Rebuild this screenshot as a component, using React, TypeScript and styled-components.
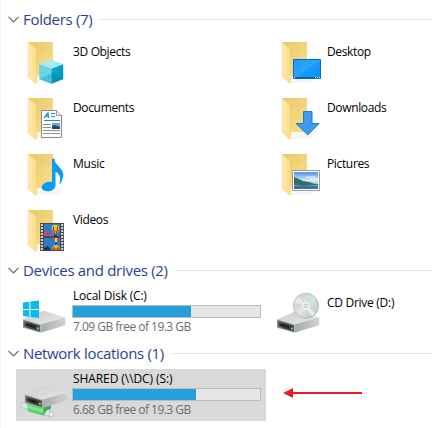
import React from "react";
import styled, { createGlobalStyle } from "styled-components";

const GlobalStyle = createGlobalStyle`
  * { box-sizing: border-box; }
  body { margin: 0; background: #fff; overflow: hidden; }
`;

const Pane = styled.main`
  width: 432px;
  height: 428px;
  padding-top: 4px;
  overflow: hidden;
  border-left: 1px solid #f5f5f5;
  background: #fff;
  font-family: "Open Sans", "Noto Sans", sans-serif;
  font-size: 12px;
  color: #000;
`;

const GroupHeader = styled.header`
  display: flex;
  align-items: center;
  height: 31px;
  padding-left: 7px;
`;

const GroupTitle = styled.h2<{ $spacing: number }>`
  margin: 0 7px 0 4px;
  padding-bottom: 2px;
  font-size: 15px;
  line-height: 20px;
  font-weight: 400;
  letter-spacing: ${(p) => p.$spacing}px;
  white-space: nowrap;
  color: #2b3f93;
`;

const Rule = styled.div`
  flex: 1;
  height: 1px;
  background: #e2e2e2;
`;

const Tiles = styled.div`
  display: grid;
  grid-template-columns: 250px 250px;
  grid-auto-rows: 52px;
  gap: 4px;
  padding-left: 15px;
`;

const TileBox = styled.div<{ $selected?: boolean }>`
  display: flex;
  padding: 2px 5px 0 4px;
  background: ${(p) => (p.$selected ? "#d9d9d9" : "transparent")};
`;

const Icon = styled.svg`
  flex: none;
  width: 48px;
  height: 48px;
  overflow: visible;
`;

const Details = styled.div<{ $center?: boolean }>`
  display: flex;
  flex-direction: column;
  width: 189px;
  margin-left: 4px;
  padding-top: ${(p) => (p.$center ? 7 : 0)}px;
`;

const Name = styled.span<{ $spacing: number }>`
  padding-left: 1px;
  line-height: 16px;
  letter-spacing: ${(p) => p.$spacing}px;
  white-space: nowrap;
`;

const Meter = styled.div`
  width: 189px;
  height: 13px;
  margin-top: 1px;
  border: 1px solid #bcbcbc;
  background: #e6e6e6;
`;

const MeterFill = styled.div<{ $width: number }>`
  width: ${(p) => p.$width}px;
  height: 11px;
  background: #26a0da;
`;

const Free = styled.span`
  padding-left: 1px;
  margin-top: 1px;
  line-height: 16px;
  letter-spacing: -0.52px;
  white-space: nowrap;
  color: #6d6d6d;
`;

const ArrowLayer = styled.svg`
  position: absolute;
  left: 282px;
  top: 386px;
  width: 82px;
  height: 14px;
`;

const Chevron = () => (
  <svg width="11" height="7" viewBox="0 0 11 7">
    <path d="M.5 .8L5.5 5.8L10.5 .8" fill="none" stroke="#6b6b6b" strokeWidth="1.2" />
  </svg>
);

const GradientSheet = styled.svg`
  display: block;
`;

const Defs = () => (
  <GradientSheet width="0" height="0">
    <defs>
      <linearGradient id="back" x1="0" y1="0" x2="1" y2="1">
        <stop offset="0" stopColor="#eac768" /><stop offset="1" stopColor="#fae08f" />
      </linearGradient>
      <linearGradient id="flap" x1="0" y1="0" x2="1" y2="0">
        <stop offset="0" stopColor="#ffeaae" /><stop offset="1" stopColor="#fadb87" />
      </linearGradient>
      <linearGradient id="screen" x1="0" y1="0" x2="1" y2="1">
        <stop offset="0" stopColor="#179aff" /><stop offset=".5" stopColor="#2aa5ff" />
        <stop offset=".53" stopColor="#169aff" /><stop offset="1" stopColor="#0c91f5" />
      </linearGradient>
      <linearGradient id="sky" x1="0" y1="0" x2="0" y2="1">
        <stop offset="0" stopColor="#4c91e5" /><stop offset=".5" stopColor="#d3ecf8" />
        <stop offset="1" stopColor="#4487b2" />
      </linearGradient>
      <linearGradient id="top" x1="0" y1="0" x2="1" y2="1">
        <stop offset="0" stopColor="#cbcbcd" /><stop offset="1" stopColor="#e9e9ea" />
      </linearGradient>
      <linearGradient id="side" x1="0" y1="0" x2="1" y2="0">
        <stop offset="0" stopColor="#a8a8ab" /><stop offset="1" stopColor="#d2d2d5" />
      </linearGradient>
      <linearGradient id="front" x1="0" y1="0" x2="1" y2="0">
        <stop offset="0" stopColor="#6a6b6d" /><stop offset=".4" stopColor="#3c3e40" /><stop offset="1" stopColor="#404244" />
      </linearGradient>
      <linearGradient id="disc" x1="0" y1="0" x2="1" y2="1">
        <stop offset="0" stopColor="#c6cccc" /><stop offset=".5" stopColor="#dfe3e3" />
        <stop offset="1" stopColor="#b4bbbb" />
      </linearGradient>
      <linearGradient id="pipe" gradientUnits="userSpaceOnUse" x1="18" y1="32" x2="15" y2="43">
        <stop offset="0" stopColor="#2aa53f" /><stop offset=".55" stopColor="#86ee93" /><stop offset="1" stopColor="#35b94c" />
      </linearGradient>
      <linearGradient id="cubeRight" x1="0" y1="0" x2="1" y2="1">
        <stop offset="0" stopColor="#0cb0d2" /><stop offset="1" stopColor="#008fb4" />
      </linearGradient>
    </defs>
  </GradientSheet>
);

const Folder = ({ children }: { children: React.ReactNode }) => (
  <Icon viewBox="0 0 48 48">
    <path d="M8 5H33V39H15Z" fill="url(#back)" />
    <path d="M15 46L17 39H40V45L35 46Z" fill="#777" opacity=".06" />
    <path d="M8 5L15.2 11.2Q16 12 16 13V38.4L17 39V46Q16 47 14.5 45.8L8 40.5Z" fill="url(#flap)" />
    <path d="M8.2 5.5V40.5" stroke="#f4d98d" strokeWidth=".5" />
    {children}
  </Icon>
);

const CubeIcon = () => (
  <Folder>
    <path d="M19.3 27L31.5 31.5V46.7L19.3 42Z" fill="#68d3e5" />
    <path d="M31.5 31.5L43.2 27V42L31.5 46.7Z" fill="url(#cubeRight)" />
    <path d="M19.3 27L31.5 22.7L43.2 27L31.5 31.5Z" fill="#a6eaf2" />
    <path d="M19.3 42L31.5 36.5V46.7Z" fill="#28b7d2" opacity=".65" />
    <path d="M31.5 36.5L43.2 42L31.5 46.7Z" fill="#0582a5" opacity=".5" />
  </Folder>
);

const DesktopIcon = () => (
  <Folder>
    <path d="M19.5 22.5H46.5V41.5H19.5Z" fill="url(#screen)" stroke="#086db9" />
    <path d="M19 40.5H47" stroke="#075c9d" />
    <path d="M20 40.5H21M41 40.5H42M43 40.5H44M45 40.5H46" stroke="#fff" />
  </Folder>
);

const DocumentIcon = () => (
  <Folder>
    <path d="M21.5 17.5H36.5L41.5 22.5V44.5H21.5Z" fill="#fafafa" stroke="#8b8b8b" />
    <path d="M36.5 17.5V22.5H41.5" fill="#e9e9e9" stroke="#8b8b8b" strokeWidth=".8" />
    <path d="M24 25L28 19.8L28.5 25M25.5 23.2H28.3" fill="none" stroke="#1987cf" strokeWidth="1.2" />
    <path d="M31 20.5H35M31 23.5H35M24 27.5H40" stroke="#1690dc" />
    <path d="M23 31.5H31M23 34.5H31M23 37.5H40M23 40.5H40" stroke="#919191" />
    <path d="M32 30H40V36H32Z" fill="#6faadf" />
    <path d="M32 33L35 32L40 34V36H32Z" fill="#244b5d" />
  </Folder>
);

const DownloadIcon = () => (
  <Folder>
    <path d="M29.5 18.5H38V30.5H45.2L33.7 42L22 30.5H29.5Z" fill="#3b9ded" stroke="#247dc9" />
  </Folder>
);

const MusicIcon = () => (
  <Folder>
    <path d="M32 10H34C34.5 17 43 18.5 43 27C43 31 41 34 39 36C42 28 38.5 23.5 35.5 23V36.5C35.5 40.5 30.5 42.5 27 42.2C23.5 42 21 40.2 22 37.2C23 34 28 31.8 32 33.2Z" fill="#079cf5" />
    <path d="M32.5 10H34C34.6 17 43 18.5 43 27" fill="none" stroke="#057fcb" strokeWidth=".7" />
  </Folder>
);

const PictureIcon = () => (
  <Folder>
    <path d="M18.5 21.5H45.5V41.5H18.5Z" fill="#fff" stroke="#9b9b9b" />
    <path d="M20 23H44V40H20Z" fill="url(#sky)" />
    <path d="M20 28L25 30L29 32L35 33L41 35L44 35V36H20Z" fill="#376e60" />
    <path d="M20 37L29 36L44 37V40H20Z" fill="#39749b" />
    <path d="M32 28H42M36 30H44" stroke="#fff" strokeWidth="2" opacity=".4" />
  </Folder>
);

const Balloon = ({ y }: { y: number }) => (
  <g transform={`translate(0 ${y})`}>
    <path d="M31.5 4Q32 .7 35.5 .7Q39.2 .7 39.2 4.4Q39.2 7.5 36.5 10H34.6Q31.5 7.3 31.5 4Z" fill="#f1bd1d" />
    <path d="M33.5 3Q32.8 5.5 35 10M37.5 3Q38 5.5 36 10" fill="none" stroke="#342756" strokeWidth=".8" />
    <path d="M32 7H39" stroke="#e44f32" strokeWidth=".8" />
    <path d="M34 11H37V12.5H34Z" fill="#33291f" />
  </g>
);

const VideoIcon = () => (
  <Folder>
    <path d="M20 18H44V46H20Z" fill="#4a4a4a" />
    <path d="M24 19H40V31H24Z" fill="#317ac9" />
    <path d="M24 33H40V45H24Z" fill="#297bcf" />
    <path d="M21.8 19V46M42.2 19V46" stroke="#d7d7d7" strokeWidth="2" strokeDasharray="2 1" />
    <path d="M24 28L27 26L31 29L34 31H24Z" fill="#e04d6b" />
    <path d="M25 29H31M28 27V31" stroke="#7952a4" />
    <Balloon y={19} />
    <path d="M33 33H39L37 37H35Z" fill="#ec4c45" />
    <path d="M35 33H37V37H35Z" fill="#f1cd34" />
    <path d="M35 38H37V39H35Z" fill="#252525" />
    <path d="M24 43L28 41L31 45H24Z" fill="#322849" />
    <path d="M32 45Q32 40 36 40Q40 40 40 45Z" fill="#f1bd1d" />
    <path d="M32 44H40" stroke="#d24431" strokeWidth="1" />
    <path d="M34 42V45M38 42V45" stroke="#342756" strokeWidth=".8" />
  </Folder>
);

const DriveBody = () => (
  <>
    <path d="M3 31.5L21.5 23.2Q23 22.7 24.5 23L45.3 29.6L20.5 36.8Z" fill="url(#top)" />
    <path d="M20.5 36.6L45.3 29.4V37.2L20.5 44.8Z" fill="url(#side)" />
    <path d="M3 31.3L20.5 36.6V44.8L3 39.8Z" fill="#a2a2a4" />
    <path d="M3.6 32.6L19.8 37.6V43.6L3.6 38.8Z" fill="url(#front)" />
    <path d="M5.5 36.3L15 39.1" stroke="#1b1b1b" strokeWidth="1.8" />
    <path d="M17 39.6H19V41.8H17Z" fill="#3fe03a" />
  </>
);

const LocalDiskIcon = () => (
  <Icon viewBox="0 0 48 48">
    <DriveBody />
    <path d="M3 14.6L9.4 13.8V20.9H3ZM10.4 13.6L19 12.6V20.9H10.4ZM3 21.9H9.4V28.9L3 28.1ZM10.4 21.9H19V30L10.4 29Z" fill="#08b9ed" />
  </Icon>
);

const CdIcon = () => (
  <Icon viewBox="0 0 48 48">
    <DriveBody />
    <circle cx="32" cy="17.8" r="12.6" fill="url(#disc)" stroke="#aab2b2" strokeWidth=".8" />
    <path d="M30 15L24.5 7.5L20 14.5L30 17Z" fill="#f4f6f6" opacity=".55" />
    <path d="M34 20L41.5 24.5L38 28.5L33 21Z" fill="#f5f7f7" opacity=".7" />
    <path d="M33 15L36 6L39.5 8L34.5 16Z" fill="#a8eddf" opacity=".65" />
    <path d="M20 15L29 17V18L20 19Z" fill="#e6cbea" opacity=".7" />
    <circle cx="32" cy="17.8" r="3.6" fill="#dde1e1" stroke="#fff" strokeWidth=".8" />
    <circle cx="32" cy="17.8" r="1.5" fill="#f9fafa" stroke="#adb4b4" strokeWidth=".7" />
  </Icon>
);

const NetworkDriveIcon = () => (
  <Icon viewBox="0 0 48 48">
    <path d="M.8 33L5 32L9 34L8 38.6L2.5 36.8Z" fill="#e4e7e7" stroke="#b0b0b0" strokeWidth=".5" />
    <path d="M22 38L32 40.6Q34.5 42.5 32 45.8L24 43.8Z" fill="#e4e7e7" stroke="#acacac" strokeWidth=".6" />
    <ellipse cx="31.4" cy="43.2" rx="1.9" ry="2.5" fill="#f4f5f5" stroke="#a4a8a8" strokeWidth=".6" />
    <path d="M8 31L25.5 36.5Q23 40.5 24.5 44.8L8.2 40.2Q6 36 8 31Z" fill="url(#pipe)" />
    <path d="M22 37L31 34.2V37.8L26.5 39.4L24.3 43.5Q22.5 40 24 37.5Z" fill="#3cae50" />
    <g transform="translate(1.8 -7.8)"><DriveBody /></g>
  </Icon>
);

type FolderTileProps = { name: string; icon: React.ReactNode; spacing?: number };

const FolderTile = ({ name, icon, spacing = -0.35 }: FolderTileProps) => (
  <TileBox>
    {icon}
    <Details $center><Name $spacing={spacing}>{name}</Name></Details>
  </TileBox>
);

type DriveTileProps = { name: string; icon: React.ReactNode; used: number; free: string; selected?: boolean; spacing?: number };

const DriveTile = ({ name, icon, used, free, selected, spacing = -0.2 }: DriveTileProps) => (
  <TileBox $selected={selected}>
    {icon}
    <Details>
      <Name $spacing={spacing}>{name}</Name>
      <Meter><MeterFill $width={used} /></Meter>
      <Free>{free}</Free>
    </Details>
  </TileBox>
);

const Group = ({ title, spacing, children }: { title: string; spacing: number; children: React.ReactNode }) => (
  <section>
    <GroupHeader><Chevron /><GroupTitle $spacing={spacing}>{title}</GroupTitle><Rule /></GroupHeader>
    <Tiles>{children}</Tiles>
  </section>
);

export default function App() {
  return (
    <>
      <GlobalStyle />
      <Defs />
      <Pane>
        <Group title="Folders (7)" spacing={-0.3}>
          <FolderTile name="3D Objects" icon={<CubeIcon />} />
          <FolderTile name="Desktop" icon={<DesktopIcon />} />
          <FolderTile name="Documents" icon={<DocumentIcon />} />
          <FolderTile name="Downloads" icon={<DownloadIcon />} />
          <FolderTile name="Music" icon={<MusicIcon />} spacing={-0.2} />
          <FolderTile name="Pictures" icon={<PictureIcon />} />
          <FolderTile name="Videos" icon={<VideoIcon />} />
        </Group>
        <Group title="Devices and drives (2)" spacing={-0.3}>
          <DriveTile name="Local Disk (C:)" icon={<LocalDiskIcon />} used={118} free="7.09 GB free of 19.3 GB" />
          <FolderTile name="CD Drive (D:)" icon={<CdIcon />} spacing={-0.28} />
        </Group>
        <Group title="Network locations (1)" spacing={-0.33}>
          <DriveTile name="SHARED (\\DC) (S:)" icon={<NetworkDriveIcon />} used={123} free="6.68 GB free of 19.3 GB" selected spacing={-0.08} />
        </Group>
      </Pane>
      <ArrowLayer viewBox="0 0 82 14">
        <path d="M9 7H80" stroke="#ed1c24" strokeWidth="2" />
        <path d="M1 7L11 2V12Z" fill="#ed1c24" />
      </ArrowLayer>
    </>
  );
}
